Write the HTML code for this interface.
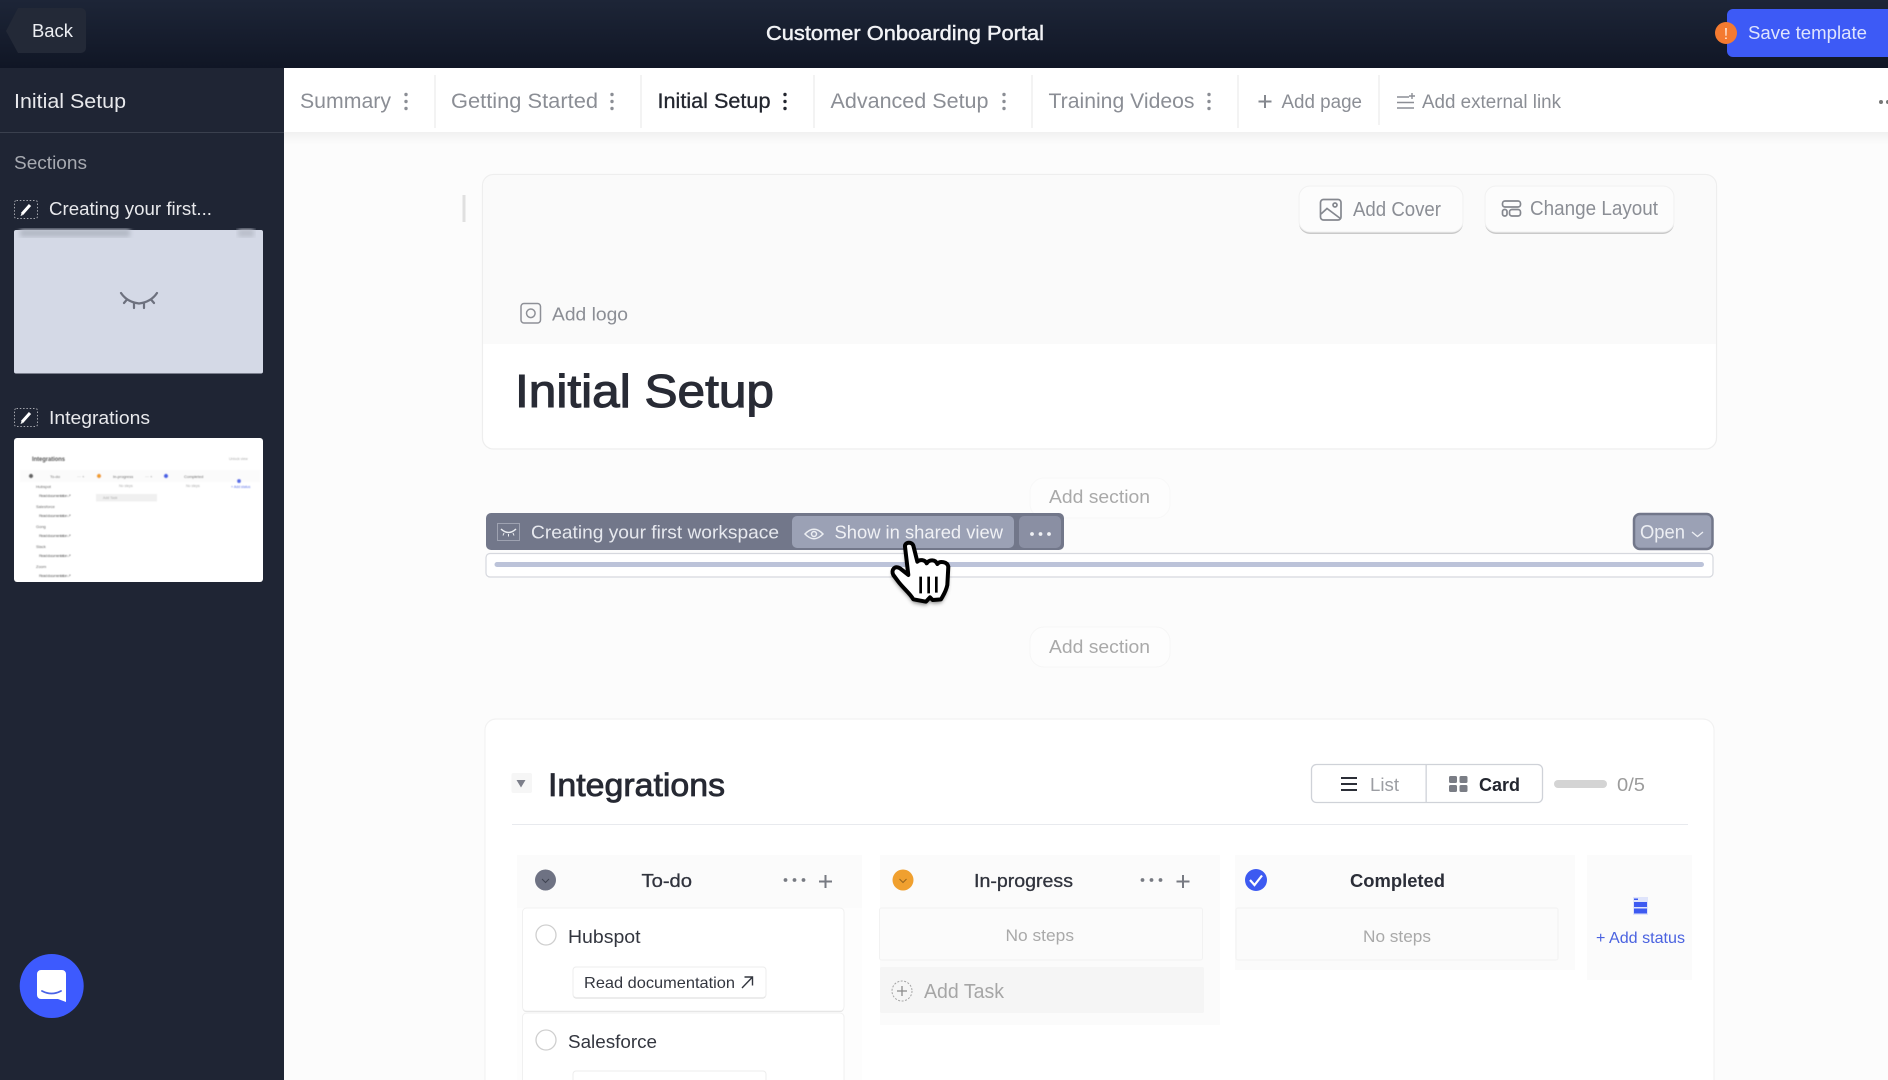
<!DOCTYPE html>
<html lang="en"><head><meta charset="utf-8"><title>Customer Onboarding Portal</title>
<style>
html,body{margin:0;padding:0;width:1888px;height:1080px;overflow:hidden;background:#fcfcfc}
svg{display:block;filter:blur(.3px)}
text{font-family:"Liberation Sans",sans-serif}
.g{fill:#8b8e95}
.l{fill:#a9a9a9}
.tabdiv{stroke:#efefef;stroke-width:1.5}
</style></head><body>
<svg xmlns="http://www.w3.org/2000/svg" width="1888" height="1080" viewBox="0 0 1888 1080">
<defs>
<linearGradient id="hd" x1="0" y1="0" x2="0" y2="1"><stop offset="0" stop-color="#1d2537"/><stop offset="1" stop-color="#101625"/></linearGradient>
<linearGradient id="sh" x1="0" y1="0" x2="0" y2="1"><stop offset="0" stop-color="#f1f1f1"/><stop offset="1" stop-color="#fcfcfc"/></linearGradient>
<filter id="b2"><feGaussianBlur stdDeviation="2.500"/></filter>
<filter id="b03"><feGaussianBlur stdDeviation=".45"/></filter>
<filter id="cs" x="-30%" y="-30%" width="160%" height="160%"><feGaussianBlur stdDeviation="6"/></filter>
</defs>

<!-- page -->
<rect width="1888" height="1080" fill="#fcfcfc"/>
<rect x="284" y="132" width="1604" height="12" fill="url(#sh)"/>

<!-- header -->
<rect width="1888" height="68" fill="url(#hd)"/>
<path d="M18 8H81a5 5 0 0 1 5 5V48a5 5 0 0 1-5 5H18L6 31Z" fill="#232937"/>
<text x="32" y="37" font-size="18" fill="#eceef2" textLength="41" lengthAdjust="spacingAndGlyphs">Back</text>
<text x="766" y="40" font-size="20.500" fill="#f2f3f6" stroke="#f2f3f6" stroke-width=".45" textLength="278" lengthAdjust="spacingAndGlyphs">Customer Onboarding Portal</text>
<rect x="1727" y="9" width="170" height="48" rx="6" fill="#3d5af6"/>
<text x="1748" y="39" font-size="18.500" fill="#dfe4fd" textLength="119" lengthAdjust="spacingAndGlyphs">Save template</text>
<circle cx="1726" cy="33" r="11" fill="#f47a30"/>
<text x="1726" y="39" font-size="16" fill="#ffe9dc" text-anchor="middle">!</text>

<!-- sidebar -->
<rect x="0" y="68" width="284" height="1012" fill="#1f2534"/>
<rect x="0" y="132" width="284" height="1" fill="#3a404e"/>
<text x="14" y="108" font-size="20" fill="#e8e9ec" textLength="112" lengthAdjust="spacingAndGlyphs">Initial Setup</text>
<text x="14" y="169" font-size="18" fill="#a7aab1" textLength="73" lengthAdjust="spacingAndGlyphs">Sections</text>

<rect x="14.500" y="200.500" width="23" height="18" rx="2" fill="none" stroke="#a4a6ad" stroke-dasharray="1.500 1.800"/>
<path d="M22 214L30 205" stroke="#fff" stroke-width="3"/><path d="M20.500 216l1-2.500 1.500 1.500z" fill="#fff"/>
<text x="49" y="215" font-size="18" fill="#e8e9ec" textLength="163" lengthAdjust="spacingAndGlyphs">Creating your first...</text>

<rect x="14" y="230" width="249" height="143.500" rx="2" fill="#d4d9e6"/>
<rect x="20" y="229" width="110" height="8" fill="#b4b9c6" filter="url(#b2)"/>
<rect x="238" y="229" width="16" height="8" fill="#babfcb" filter="url(#b2)"/>
<g fill="none" stroke="#6d717e" stroke-width="2.200" stroke-linecap="round">
<path d="M121 293Q127 302 139 303.500Q151 302 157 293"/>
<path d="M127 299.500L124 303M134 303V308M144 303V308M151 299.500L154 303"/>
</g>

<rect x="14.500" y="408.500" width="23" height="18" rx="2" fill="none" stroke="#a4a6ad" stroke-dasharray="1.500 1.800"/>
<path d="M22 422L30 413" stroke="#fff" stroke-width="3"/><path d="M20.500 424l1-2.500 1.500 1.500z" fill="#fff"/>
<text x="49" y="424" font-size="18" fill="#e8e9ec" textLength="101" lengthAdjust="spacingAndGlyphs">Integrations</text>

<!-- thumb 2 -->
<rect x="14" y="438" width="249" height="144" rx="3" fill="#fff"/>
<g filter="url(#b03)">
<text x="32" y="461" font-size="6" font-weight="bold" fill="#555" textLength="33" lengthAdjust="spacingAndGlyphs">Integrations</text>
<text x="229" y="460" font-size="3.500" fill="#aaa">Unlock view</text>
<rect x="20" y="470" width="240" height="12" fill="#fbfbfb"/>
<circle cx="31" cy="476" r="2.200" fill="#666"/><circle cx="99" cy="476" r="2.200" fill="#f0a02f"/><circle cx="166" cy="476" r="2.200" fill="#4a63e6"/>
<text x="50" y="478" font-size="4" fill="#555">To-do</text><text x="113" y="478" font-size="4" fill="#555">In-progress</text><text x="184" y="478" font-size="4" fill="#555">Completed</text>
<text x="77" y="478" font-size="4" fill="#888">··· +</text><text x="145" y="478" font-size="4" fill="#888">··· +</text>
<g font-size="4" fill="#666">
<text x="36" y="488">Hubspot</text><text x="39" y="497" textLength="32">Read documentation ↗</text>
<text x="36" y="508">Salesforce</text><text x="39" y="517" textLength="32">Read documentation ↗</text>
<text x="36" y="528">Gong</text><text x="39" y="537" textLength="32">Read documentation ↗</text>
<text x="36" y="548">Slack</text><text x="39" y="557" textLength="32">Read documentation ↗</text>
<text x="36" y="568">Zoom</text><text x="39" y="577" textLength="32">Read documentation ↗</text>
</g>
<text x="119" y="487" font-size="3.500" fill="#aaa">No steps</text><text x="186" y="487" font-size="3.500" fill="#aaa">No steps</text>
<rect x="96" y="494" width="61" height="7.500" fill="#f0f0f0"/><text x="103" y="499" font-size="3.500" fill="#aaa">Add Task</text>
<circle cx="239" cy="481" r="2" fill="#5a70e8"/><text x="231" y="488" font-size="3.500" fill="#5a70e8">+ Add status</text>
</g>

<!-- chat -->
<circle cx="51.700" cy="986" r="32" fill="#3d5afe"/>
<path d="M41 970H62a4 4 0 0 1 4 4V1002L58 999H41a4 4 0 0 1-4-4V974a4 4 0 0 1 4-4Z" fill="#fff"/>
<path d="M42 991Q51.500 996 61 991" fill="none" stroke="#4a63e6" stroke-width="1.800" stroke-linecap="round"/>

<!-- tab bar -->
<rect x="284" y="68" width="1604" height="64" fill="#fff"/>
<g font-size="21">
<text x="300" y="108" class="g" textLength="91" lengthAdjust="spacingAndGlyphs">Summary</text>
<text x="451" y="108" class="g" textLength="147" lengthAdjust="spacingAndGlyphs">Getting Started</text>
<text x="657.500" y="108" fill="#23262f" stroke="#23262f" stroke-width=".3" textLength="113" lengthAdjust="spacingAndGlyphs">Initial Setup</text>
<text x="830.500" y="108" class="g" textLength="158" lengthAdjust="spacingAndGlyphs">Advanced Setup</text>
<text x="1048.500" y="108" class="g" textLength="146" lengthAdjust="spacingAndGlyphs">Training Videos</text>
</g>
<g fill="#8b8e95">
<circle cx="406" cy="94.500" r="1.700"/><circle cx="406" cy="101.500" r="1.700"/><circle cx="406" cy="108.500" r="1.700"/>
<circle cx="612" cy="94.500" r="1.700"/><circle cx="612" cy="101.500" r="1.700"/><circle cx="612" cy="108.500" r="1.700"/>
<circle cx="785" cy="94.500" r="1.700" fill="#23262f"/><circle cx="785" cy="101.500" r="1.700" fill="#23262f"/><circle cx="785" cy="108.500" r="1.700" fill="#23262f"/>
<circle cx="1004" cy="94.500" r="1.700"/><circle cx="1004" cy="101.500" r="1.700"/><circle cx="1004" cy="108.500" r="1.700"/>
<circle cx="1209" cy="94.500" r="1.700"/><circle cx="1209" cy="101.500" r="1.700"/><circle cx="1209" cy="108.500" r="1.700"/>
</g>
<path class="tabdiv" d="M435 75V128M641 75V128M814 75V128M1032 75V128M1238 75V128M1379 75V125"/>
<path d="M1265 95V108M1258.500 101.500H1271.500" stroke="#85888f" stroke-width="2"/>
<text x="1281.500" y="108" font-size="19" class="g" textLength="80.500" lengthAdjust="spacingAndGlyphs">Add page</text>
<path d="M1397 97H1409M1397 102.500H1414M1397 108H1414M1412 93V99M1409 96H1415" stroke="#8b8e95" stroke-width="1.400" fill="none"/>
<text x="1422" y="108" font-size="19" class="g" textLength="139" lengthAdjust="spacingAndGlyphs">Add external link</text>
<circle cx="1881" cy="102" r="2" fill="#777"/><circle cx="1888" cy="102" r="2" fill="#777"/>

<!-- hero card -->
<rect x="462.500" y="195" width="3" height="27" fill="#e0e0e0"/>
<rect x="482.500" y="174.500" width="1234" height="274.500" rx="11" fill="#fff" stroke="#eeeeee" stroke-width="1.200"/>
<path d="M494 175.100H1705a11 11 0 0 1 11 11V344H483V186a11 11 0 0 1 11-11Z" fill="#fafafa"/>

<rect x="1299" y="188" width="164" height="46" rx="11" fill="#c9c9c9"/>
<rect x="1299" y="186" width="164" height="46" rx="11" fill="#fcfcfc" stroke="#f1f1f1"/>
<rect x="1485" y="188" width="189" height="46" rx="11" fill="#c9c9c9"/>
<rect x="1485" y="186" width="189" height="46" rx="11" fill="#fcfcfc" stroke="#f1f1f1"/>
<g fill="none" stroke="#85888f" stroke-width="1.700">
<rect x="1320.500" y="199.500" width="20.500" height="20.500" rx="3"/>
<circle cx="1335" cy="205" r="2"/>
<path d="M1321 214L1327 208.500L1341 219"/>
<rect x="1502.500" y="201" width="18" height="6" rx="2.500"/>
<rect x="1502.500" y="209.500" width="4.500" height="6.500" rx="2"/>
<rect x="1509.500" y="209.500" width="11" height="6.500" rx="2.500"/>
</g>
<text x="1353" y="216" font-size="20" class="g" textLength="88" lengthAdjust="spacingAndGlyphs">Add Cover</text>
<text x="1530" y="215" font-size="20" class="g" textLength="128" lengthAdjust="spacingAndGlyphs">Change Layout</text>

<rect x="521" y="303.500" width="19.500" height="19.500" rx="3" fill="none" stroke="#8e9097" stroke-width="1.500"/>
<circle cx="530.800" cy="313.300" r="4.300" fill="none" stroke="#8e9097" stroke-width="1.500"/>
<text x="552" y="320.500" font-size="18.500" class="g" textLength="76" lengthAdjust="spacingAndGlyphs">Add logo</text>
<text x="515" y="407" font-size="46" fill="#282b35" stroke="#282b35" stroke-width="1.100" textLength="259" lengthAdjust="spacingAndGlyphs">Initial Setup</text>

<!-- add section 1 -->
<rect x="1030" y="478" width="140" height="40" rx="14" fill="#fdfdfd" stroke="#f8f8f8"/>
<text x="1049" y="503" font-size="18" class="l" textLength="101" lengthAdjust="spacingAndGlyphs">Add section</text>

<!-- toolbar -->
<rect x="486" y="513" width="578" height="37" rx="5" fill="#72778a"/>
<rect x="497.500" y="523.500" width="22" height="17" fill="none" stroke="#9ea2b1"/>
<path d="M501 529Q508.500 536 516 529" fill="none" stroke="#eceef2" stroke-width="1.500"/>
<path d="M504 533l-1 2.500M508.500 534v2.500M513 533l1 2.500" stroke="#eceef2" stroke-width="1"/>
<text x="531" y="538.500" font-size="18.500" fill="#e6e8ee" textLength="248" lengthAdjust="spacingAndGlyphs">Creating your first workspace</text>
<rect x="792" y="516" width="222" height="32" rx="5" fill="#9ba1b5"/>
<path d="M805 534Q814 524.500 823 534Q814 543.500 805 534Z" fill="none" stroke="#eceef2" stroke-width="1.500"/><circle cx="814" cy="534" r="2.500" fill="none" stroke="#eceef2" stroke-width="1.500"/>
<text x="834.500" y="538.500" font-size="18.500" fill="#f0f1f5" textLength="168.500" lengthAdjust="spacingAndGlyphs">Show in shared view</text>
<rect x="1019" y="516" width="42" height="32" rx="5" fill="#8a8fa3"/>
<circle cx="1032" cy="534" r="1.900" fill="#f0f1f5"/><circle cx="1040.500" cy="534" r="1.900" fill="#f0f1f5"/><circle cx="1049" cy="534" r="1.900" fill="#f0f1f5"/>

<rect x="486" y="553.500" width="1227" height="23.500" rx="4" fill="#fff" stroke="#d6d8de" stroke-width="1.200"/>
<rect x="494.500" y="562" width="1209.500" height="5" rx="2.500" fill="#bcc3d9"/>

<rect x="1634" y="514" width="78.500" height="35" rx="6" fill="#9ba1b5" stroke="#72778a" stroke-width="2.500"/>
<text x="1640" y="538.500" font-size="19" fill="#eceef3" textLength="45" lengthAdjust="spacingAndGlyphs">Open</text>
<path d="M1692 532L1697.500 536.500L1703 532" fill="none" stroke="#eceef3" stroke-width="1.300"/>

<!-- add section 2 -->
<rect x="1030" y="627" width="140" height="40" rx="14" fill="#fdfdfd" stroke="#f6f6f6"/>
<text x="1049" y="653" font-size="18" class="l" textLength="101" lengthAdjust="spacingAndGlyphs">Add section</text>

<!-- integrations card -->
<rect x="485" y="719" width="1229" height="400" rx="11" fill="#fff" stroke="#f2f2f2" stroke-width="1.200"/>
<rect x="511.500" y="773" width="20.500" height="20" rx="2" fill="#f6f6f6"/>
<path d="M516.500 780H525.500L521 787.500Z" fill="#7c7f8a"/>
<text x="548" y="796" font-size="32" fill="#262933" stroke="#262933" stroke-width=".8" textLength="177" lengthAdjust="spacingAndGlyphs">Integrations</text>
<rect x="512" y="824" width="1176" height="1" fill="#e8eaee"/>

<rect x="1311.500" y="764.500" width="231" height="38" rx="5" fill="#fff" stroke="#cfd2d8" stroke-width="1.300"/>
<rect x="1425.500" y="765" width="1.300" height="37" fill="#cfd2d8"/>
<path d="M1341 778H1357M1341 784H1357M1341 790H1357" stroke="#2b2e37" stroke-width="2"/>
<text x="1370" y="791" font-size="18" fill="#9c9ea3" textLength="29" lengthAdjust="spacingAndGlyphs">List</text>
<g fill="#7a7d85"><rect x="1449" y="776" width="8" height="7" rx="1.500"/><rect x="1459.500" y="776" width="8" height="7" rx="1.500"/><rect x="1449" y="785" width="8" height="7" rx="1.500"/><rect x="1459.500" y="785" width="8" height="7" rx="1.500"/></g>
<text x="1479" y="791" font-size="18" font-weight="bold" fill="#23262f" textLength="41" lengthAdjust="spacingAndGlyphs">Card</text>
<rect x="1554" y="780" width="53" height="8" rx="4" fill="#d4d4d4"/>
<text x="1617" y="791" font-size="18" fill="#9c9c9c" textLength="28" lengthAdjust="spacingAndGlyphs">0/5</text>

<!-- columns -->
<rect x="517" y="855" width="345" height="225" fill="#fdfdfd"/>
<rect x="517" y="855" width="345" height="53" fill="#fbfbfb"/>
<rect x="880" y="855" width="340" height="170" fill="#fbfbfb"/>
<rect x="1235" y="855" width="340" height="115" fill="#fbfbfb"/>
<rect x="1587" y="855" width="105" height="125" fill="#fbfbfb"/>

<circle cx="545.500" cy="880" r="10.500" fill="#6e7283"/>
<path d="M542 879L545.500 882.500L549 879" fill="none" stroke="#3e4250" stroke-width="1"/>
<text x="641.500" y="887" font-size="18" fill="#30333d" stroke="#30333d" stroke-width=".3" textLength="50.500" lengthAdjust="spacingAndGlyphs">To-do</text>
<g fill="#777a82"><circle cx="785.500" cy="880" r="1.900"/><circle cx="794.500" cy="880" r="1.900"/><circle cx="803.500" cy="880" r="1.900"/>
<circle cx="1142.500" cy="880" r="1.900"/><circle cx="1151.500" cy="880" r="1.900"/><circle cx="1160.500" cy="880" r="1.900"/></g>
<path d="M825.500 875V888M819 881.500H832M1183 875V888M1176.500 881.500H1189.500" stroke="#777a82" stroke-width="2"/>

<circle cx="903" cy="880" r="10.500" fill="#f0a02f"/>
<path d="M899.500 879L903 882.500L906.500 879" fill="none" stroke="#96641d" stroke-width="1"/>
<text x="974" y="887" font-size="18" fill="#30333d" stroke="#30333d" stroke-width=".3" textLength="99" lengthAdjust="spacingAndGlyphs">In-progress</text>

<circle cx="1256" cy="880" r="11" fill="#3d5af1"/>
<path d="M1250 880L1254.500 885L1262 875.500" fill="none" stroke="#fff" stroke-width="2.200"/>
<text x="1350" y="887" font-size="18" font-weight="bold" fill="#2b2e38" textLength="95" lengthAdjust="spacingAndGlyphs">Completed</text>

<!-- todo cards -->
<rect x="522.500" y="909" width="321.500" height="103" rx="4" fill="#dcdcdc"/>
<rect x="522.500" y="908" width="321.500" height="103" rx="4" fill="#fff" stroke="#f0f0f0"/>
<circle cx="546" cy="935" r="10" fill="#fff" stroke="#cfcfcf" stroke-width="1.300"/>
<text x="568" y="943" font-size="18" fill="#33363f" textLength="72.500" lengthAdjust="spacingAndGlyphs">Hubspot</text>
<rect x="573" y="968" width="193" height="30.500" rx="3" fill="#dadada"/>
<rect x="573" y="967" width="193" height="30.500" rx="3" fill="#fff" stroke="#ececec"/>
<text x="584" y="988" font-size="16" fill="#33363f" textLength="151" lengthAdjust="spacingAndGlyphs">Read documentation</text>
<path d="M742 988L752.500 977M744.500 977H752.500V985.500" fill="none" stroke="#33363f" stroke-width="1.400"/>

<rect x="522.500" y="1013" width="321.500" height="80" rx="4" fill="#fff" stroke="#f0f0f0"/>
<circle cx="546" cy="1040" r="10" fill="#fff" stroke="#cfcfcf" stroke-width="1.300"/>
<text x="568" y="1048" font-size="18" fill="#33363f" textLength="89" lengthAdjust="spacingAndGlyphs">Salesforce</text>
<rect x="573" y="1071" width="193" height="30" rx="3" fill="#fff" stroke="#ececec"/>

<!-- in-progress -->
<rect x="879.500" y="908" width="323" height="52" rx="2" fill="#fbfbfb" stroke="#f2f2f2"/>
<text x="1005.500" y="941" font-size="17" class="l" textLength="68.500" lengthAdjust="spacingAndGlyphs">No steps</text>
<rect x="880" y="967" width="324" height="46" rx="2" fill="#f5f5f5"/>
<circle cx="902" cy="991" r="10" fill="none" stroke="#a5a5a5" stroke-dasharray="2 1.500"/>
<path d="M902 986V996M897 991H907" stroke="#8b8b8b" stroke-width="1.300"/>
<text x="924" y="998" font-size="20" fill="#a6a6a6" textLength="80" lengthAdjust="spacingAndGlyphs">Add Task</text>

<!-- completed -->
<rect x="1236" y="908" width="322" height="52" rx="2" fill="#fbfbfb" stroke="#f2f2f2"/>
<text x="1363" y="942" font-size="17" class="l" textLength="68" lengthAdjust="spacingAndGlyphs">No steps</text>

<!-- add status -->
<rect x="1633" y="897" width="15" height="18" fill="#dfe4fb"/>
<rect x="1634" y="902" width="13" height="5" fill="#3d5af1"/><rect x="1634" y="908.500" width="13" height="5" fill="#3d5af1"/><rect x="1634" y="898.500" width="4" height="1.500" fill="#3d5af1"/>
<text x="1596" y="943" font-size="16" fill="#4a62e0" textLength="89" lengthAdjust="spacingAndGlyphs">+ Add status</text>

<!-- cursor -->
<g transform="translate(860 520) scale(.3333)">
<path d="M135 95C133 82 155 78 160 92L172 135C178 128 195 128 200 140C208 128 226 128 232 142C240 132 262 135 265 150L262 205C258 225 250 235 243 248L218 250L210 242L198 255L160 248C150 230 130 215 115 195L100 175C92 150 105 145 120 155L145 175Z" fill="#000" opacity=".5" filter="url(#cs)"/>
<path d="M135 80C133 67 155 63 160 77L172 125C178 118 195 118 200 130C208 118 226 118 232 132C240 122 262 125 265 140L262 195C258 215 250 225 243 238L218 240L210 232L198 245L160 238C150 220 130 205 115 185L100 165C92 150 105 135 120 145L145 165Z" fill="#fff" stroke="#000" stroke-width="12" stroke-linejoin="round"/>
<path d="M182 170V220M206 170V220M229 170V218" stroke="#000" stroke-width="8"/>
</g>
</svg>
</body></html>
